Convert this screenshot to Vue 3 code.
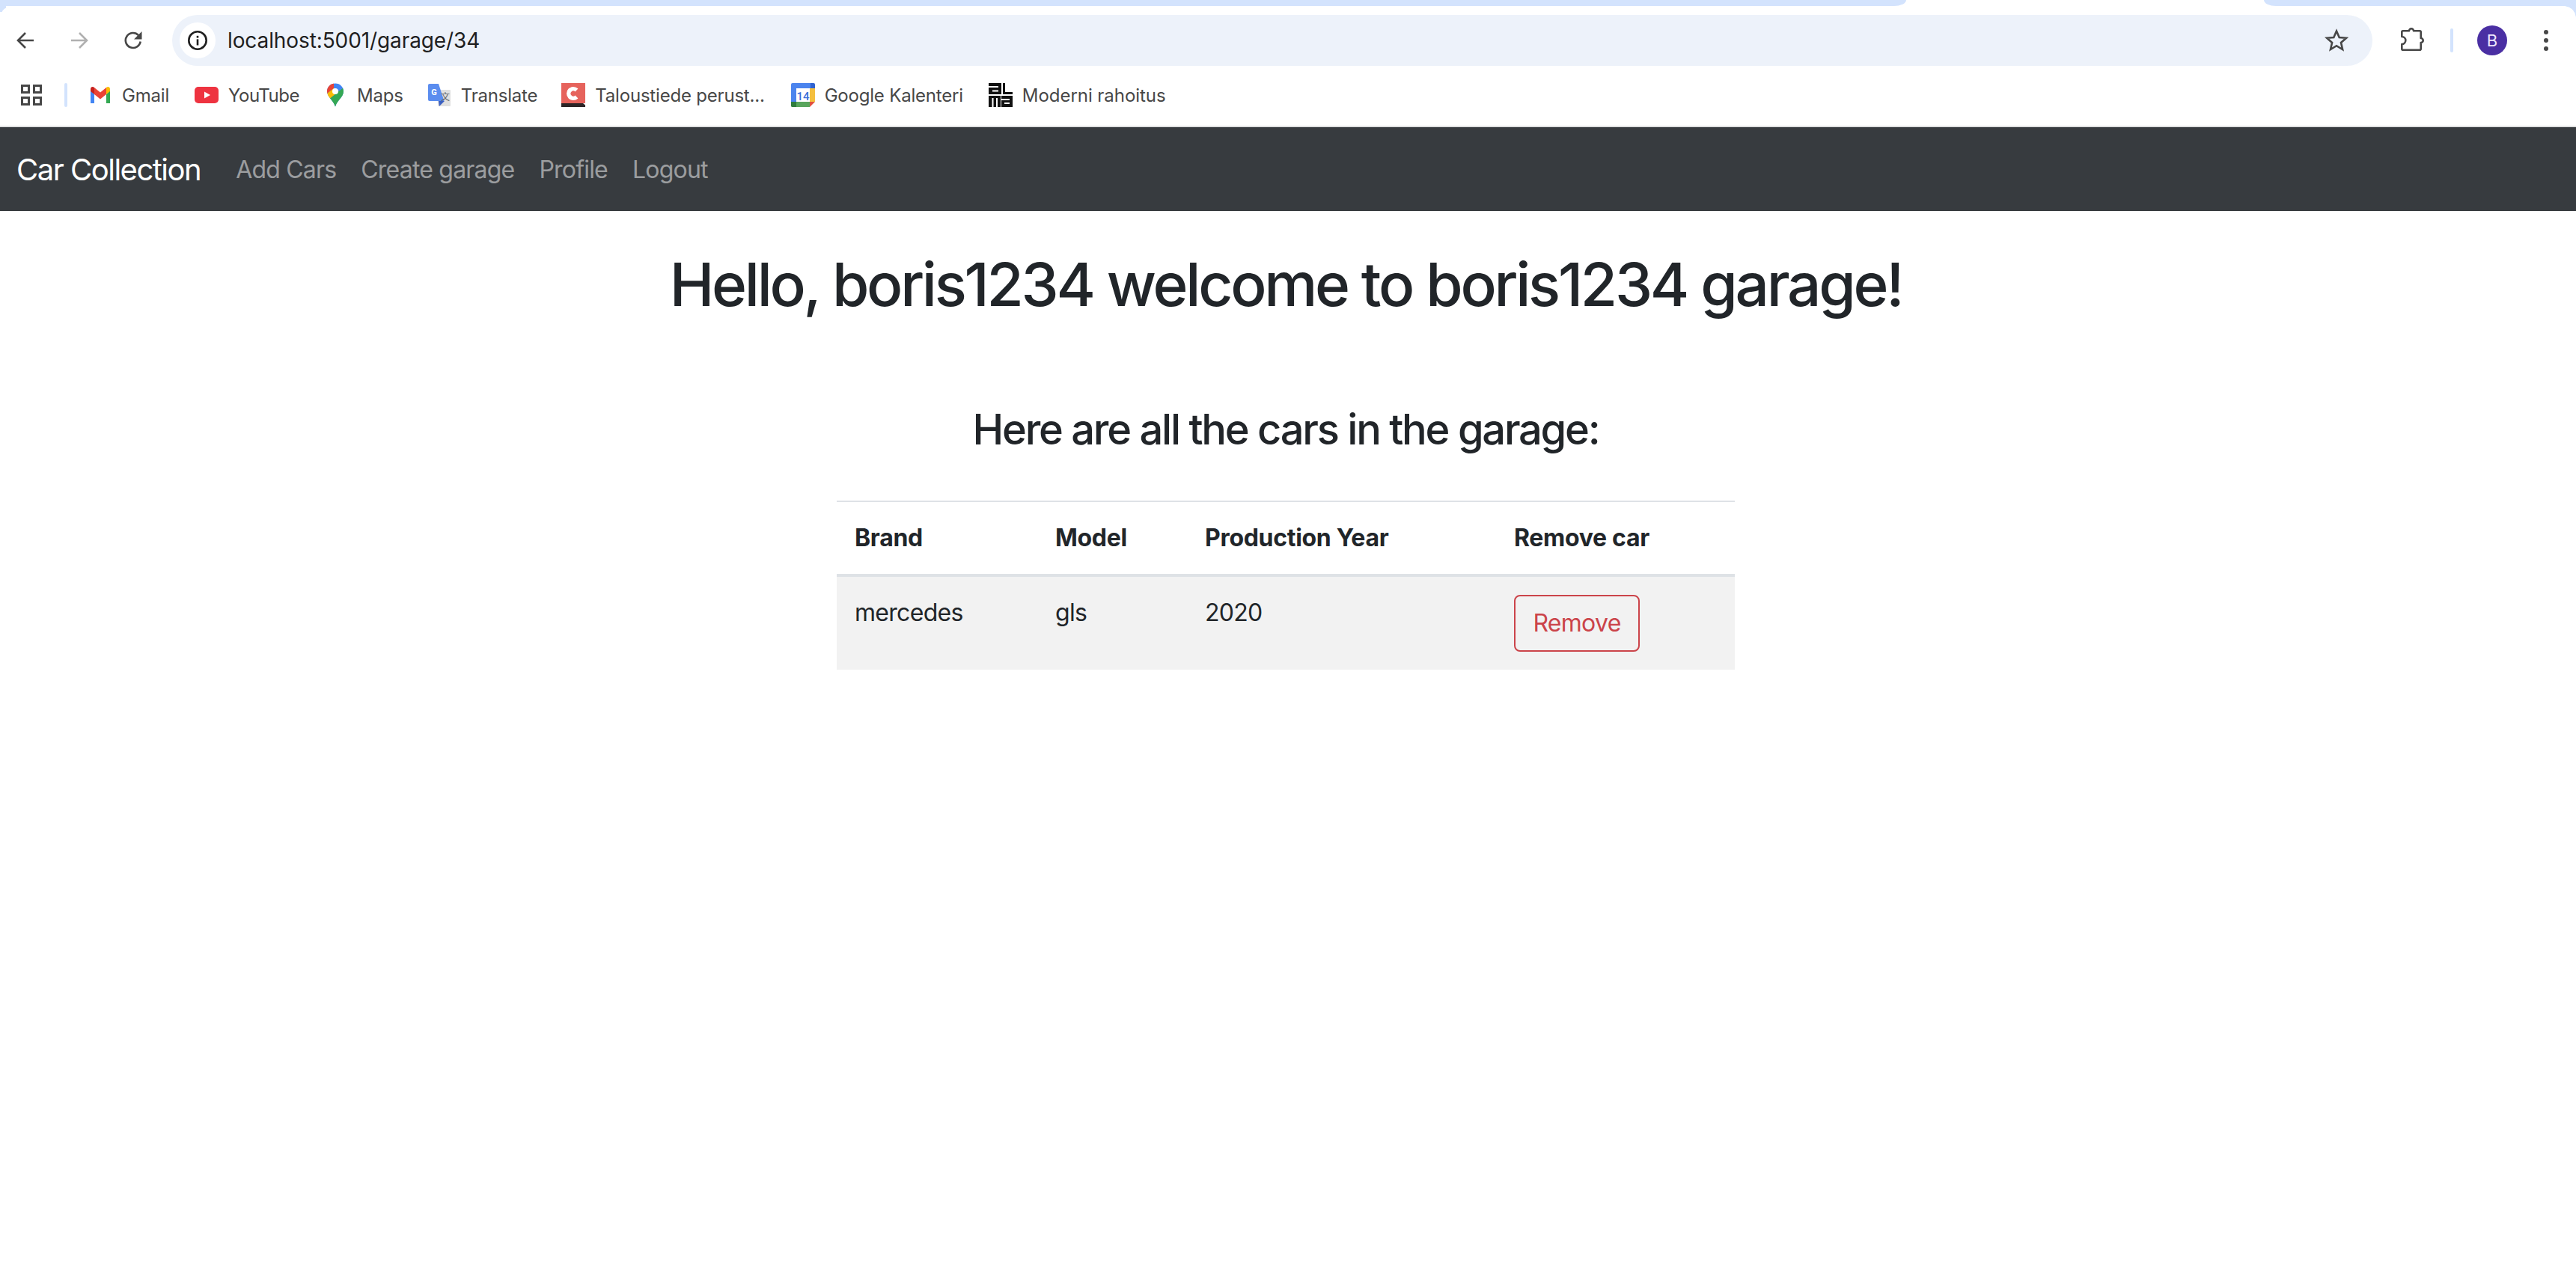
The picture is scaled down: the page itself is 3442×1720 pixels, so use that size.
<script setup>
const bookmarks = [
  { name: 'Gmail', icon: 'gmail' },
  { name: 'YouTube', icon: 'youtube' },
  { name: 'Maps', icon: 'maps' },
  { name: 'Translate', icon: 'translate' },
  { name: 'Taloustiede perust...', icon: 'c' },
  { name: 'Google Kalenteri', icon: 'calendar' },
  { name: 'Moderni rahoitus', icon: 'alma' }
]
const navLinks = ['Add Cars', 'Create garage', 'Profile', 'Logout']
</script>

<template>
  <div class="page">
    <div class="tabstrip">
      <div class="strip left"></div>
      <div class="strip right"></div>
    </div>
    <div class="toolbar">
      <svg class="tool-icon" viewBox="0 0 24 24"><path d="M23 12H3M12 2 2 12l10 10" fill="none" stroke="#474747" stroke-width="2.600"/></svg>
      <svg class="tool-icon" viewBox="0 0 24 24"><path d="M1 12h20M12 2l10 10-10 10" fill="none" stroke="#b0b0b0" stroke-width="2.600"/></svg>
      <svg class="tool-icon" viewBox="0 0 24 24"><path d="M21.700 13.500A10 10 0 1 1 19 5" fill="none" stroke="#474747" stroke-width="2.600"/><path d="M23.500 0v10.500H13z" fill="#474747"/></svg>
      <div class="omnibox">
        <div class="info-chip">
          <svg class="info-icon" viewBox="0 0 24 24"><circle cx="12" cy="12" r="10.800" fill="none" stroke="#1f1f1f" stroke-width="2.400"/><rect x="10.800" y="10.500" width="2.400" height="7.500" fill="#1f1f1f"/><rect x="10.800" y="6.300" width="2.400" height="2.600" fill="#1f1f1f"/></svg>
        </div>
        <span class="url">localhost:5001/garage/34</span>
        <svg class="star" viewBox="0 0 32 32"><path d="m16 3.500 3.700 8.500 9.300.800-7 6.100 2.100 9.100-8.100-4.800-8 4.800 2.100-9.100-7-6.100 9.200-.800z" fill="none" stroke="#474747" stroke-width="2.600"/></svg>
      </div>
      <svg class="puzzle" viewBox="0 0 32 32"><path d="M2.800 5.300H11A3 3 0 0 1 17 5.300H25.200a1.500 1.500 0 0 1 1.500 1.500V15A3 3 0 0 1 26.700 21V29.200a1.500 1.500 0 0 1-1.500 1.500H2.800a1.500 1.500 0 0 1-1.500-1.500V23A5 5 0 0 0 1.300 13V6.800a1.500 1.500 0 0 1 1.500-1.500z" fill="none" stroke="#474747" stroke-width="2.600" stroke-linejoin="round"/></svg>
      <div class="tool-sep"></div>
      <div class="avatar">B</div>
      <svg class="dots" viewBox="0 0 8 32"><circle cx="4" cy="5" r="3" fill="#474747"/><circle cx="4" cy="16" r="3" fill="#474747"/><circle cx="4" cy="27" r="3" fill="#474747"/></svg>
    </div>

    <div class="bookmarks">
      <svg class="apps" viewBox="0 0 28 28">
        <g fill="none" stroke="#474747" stroke-width="3"><rect x="1.500" y="1.500" width="9" height="9"/><rect x="17.500" y="1.500" width="9" height="9"/><rect x="1.500" y="17.500" width="9" height="9"/><rect x="17.500" y="17.500" width="9" height="9"/></g>
      </svg>
      <div class="bm-sep"></div>
      <div class="bm-list">
        <div v-for="b in bookmarks" :key="b.name" class="bm" :class="'bm-' + b.icon">
          <svg v-if="b.icon === 'gmail'" class="bm-icon" viewBox="0 0 32 32">
            <path d="M3 27h5V15L3 10z" fill="#4285f4"/><path d="M24 27h5V10l-5 5z" fill="#34a853"/><path d="M24 6v9l5-4V8c0-3-3-4-5-2z" fill="#fbbc04"/><path d="M8 15V6l8 6.500L24 6v9l-8 6.500z" fill="#ea4335"/><path d="M3 8v3l5 4V6C6 4 3 5 3 8z" fill="#c5221f"/>
          </svg>
          <svg v-else-if="b.icon === 'youtube'" class="bm-icon" viewBox="0 0 32 32">
            <rect x="0" y="5" width="32" height="22" rx="5" fill="#ee3340"/><path d="M13 11.500 21 16l-8 4.500z" fill="#fff"/>
          </svg>
          <svg v-else-if="b.icon === 'maps'" class="bm-icon" viewBox="0 0 32 32">
            <clipPath id="pin"><path d="M16 .5C9.500.5 5 5.500 5 11c0 8 8 11 11 20.500 3-9.500 11-12.500 11-20.500C27 5.500 22.500.5 16 .5z"/></clipPath>
            <g clip-path="url(#pin)">
              <rect width="32" height="32" fill="#4285f4"/>
              <path d="M0 0h14v7L0 18z" fill="#ea4335"/>
              <path d="M0 18 14 7l7 4L6 23H0z" fill="#fbbc04"/>
              <path d="M6 23 27 6h5v26H0z" fill="#34a853"/>
            </g>
            <circle cx="16" cy="11" r="4" fill="#fff"/>
          </svg>
          <svg v-else-if="b.icon === 'translate'" class="bm-icon" viewBox="0 0 32 32">
            <rect x="14" y="9" width="17" height="22" rx="1" fill="#e0e0e0"/>
            <path d="M3 1h12l7.500 23H3a2 2 0 0 1-2-2V3a2 2 0 0 1 2-2z" fill="#5b8def"/>
            <path d="M15 24h8l-7 7z" fill="#3b5fc0"/>
            <text x="9" y="16" text-anchor="middle" class="gt-g">G</text>
            <text x="24" y="23" text-anchor="middle" class="gt-k">文</text>
          </svg>
          <svg v-else-if="b.icon === 'c'" class="bm-icon" viewBox="0 0 32 32">
            <rect width="32" height="27" fill="#e6635c"/><path d="M0 27h29l3 2.500V32H0z" fill="#2b2426"/>
            <path d="M20.500 9.500a6.300 6.300 0 1 0 0 9" fill="none" stroke="#fff" stroke-width="5.500"/>
          </svg>
          <svg v-else-if="b.icon === 'calendar'" class="bm-icon" viewBox="0 0 32 32">
            <path d="M2 0h24v7H7v18H0V2a2 2 0 0 1 2-2z" fill="#4b84ee"/>
            <path d="M26 0h4a2 2 0 0 1 2 2v5h-6z" fill="#2f62d0"/>
            <rect x="25" y="7" width="7" height="18" fill="#f4bf3f"/>
            <path d="M7 25h18v7H2a2 2 0 0 1-2-2v-5z" fill="#58a55c"/>
            <path d="M0 25h7v7H2a2 2 0 0 1-2-2z" fill="#2f7d3d"/>
            <path d="M25 25h7l-7 7z" fill="#e0503f"/>
            <text x="16" y="22.500" text-anchor="middle" class="cal-num">14</text>
          </svg>
          <svg v-else class="bm-icon" viewBox="0 0 32 32">
            <rect width="17" height="15" fill="#111"/>
            <rect y="4" width="13" height="2" fill="#fff"/>
            <rect x="5" y="9.500" width="8" height="2" fill="#fff"/>
            <path d="M19 0h3v12h10v3H19z" fill="#111"/>
            <rect y="17" width="16" height="15" fill="#111"/>
            <rect x="4.500" y="20" width="2" height="12" fill="#fff"/>
            <rect x="10" y="20" width="2" height="12" fill="#fff"/>
            <rect x="17" y="17" width="15" height="15" fill="#111"/>
            <rect x="17" y="21" width="11" height="2" fill="#fff"/>
            <rect x="21" y="26" width="7" height="2" fill="#fff"/>
          </svg>
          <span class="bm-text">{{ b.name }}</span>
        </div>
      </div>
    </div>

    <nav class="navbar">
      <a class="brand">Car Collection</a>
      <a v-for="link in navLinks" :key="link" class="nav-link">{{ link }}</a>
    </nav>

    <main class="content">
      <h1 class="title">Hello, boris1234 welcome to boris1234 garage!</h1>
      <h3 class="subtitle">Here are all the cars in the garage:</h3>
      <table class="cars">
        <colgroup>
          <col class="c1" /><col class="c2" /><col class="c3" /><col class="c4" />
        </colgroup>
        <thead>
          <tr><th>Brand</th><th>Model</th><th>Production Year</th><th>Remove car</th></tr>
        </thead>
        <tbody>
          <tr>
            <td>mercedes</td>
            <td>gls</td>
            <td>2020</td>
            <td><button class="remove">Remove</button></td>
          </tr>
        </tbody>
      </table>
    </main>
  </div>
</template>

<style>
html, body { margin: 0; background: #fff; }
</style>

<style scoped>
.page {
  width: 3442px;
  height: 1720px;
  overflow: hidden;
  background: #fff;
  font-family: Inter, "Liberation Sans", sans-serif;
  color: #212529;
}
.tabstrip { height: 8px; display: flex; justify-content: space-between; }
.strip { height: 8px; background: #d3e3fd; }
.strip.left { width: 2547px; border-bottom-right-radius: 16px 8px; }
.strip.right { width: 417px; border-bottom-left-radius: 16px 8px; }
.toolbar {
  position: relative;
  height: 92px;
  display: flex;
  align-items: flex-start;
  padding-top: 12px;
  box-sizing: border-box;
}
.toolbar::before, .toolbar::after {
  content: "";
  position: absolute;
  top: 0;
  width: 16px;
  height: 16px;
}
.toolbar::before { left: 0; background: radial-gradient(circle at 100% 100%, transparent 15.500px, #d3e3fd 16px); width: 8px; height: 8px; background-size: 16px 16px; }
.toolbar::after { right: 0; background: radial-gradient(circle at 0 100%, transparent 15.500px, #d3e3fd 16px); }
.tool-icon { width: 24px; height: 24px; margin: 22px 0 0 22px; flex: none; }
.tool-icon + .tool-icon { margin-left: 48px; }
.omnibox {
  margin-left: 40px;
  width: 2940px;
  height: 68px;
  border-radius: 34px;
  background: #edf2fa;
  display: flex;
  align-items: center;
  flex: none;
}
.info-chip {
  width: 48px;
  height: 48px;
  margin-left: 10px;
  border-radius: 50%;
  background: #fff;
  display: flex;
  align-items: center;
  justify-content: center;
}
.info-icon { width: 26px; height: 26px; }
.url {
  margin-left: 16px;
  font-size: 28px;
  letter-spacing: -0.1px;
  color: #1f1f1f;
  flex: 1;
  line-height: 68px;
}
.star { width: 32px; height: 32px; margin-right: 32px; }
.puzzle { width: 32px; height: 32px; margin: 16px 0 0 38px; flex: none; }
.tool-sep { width: 4px; height: 32px; border-radius: 2px; background: #d3e3fd; margin: 18px 0 0 34px; flex: none; }
.avatar {
  width: 40px;
  height: 40px;
  border-radius: 50%;
  background: #4a2fa3;
  color: #efe9ff;
  font-size: 22px;
  line-height: 40px;
  text-align: center;
  margin: 14px 0 0 32px;
  flex: none;
}
.dots { width: 8px; height: 32px; margin: 18px 0 0 48px; flex: none; }

.bookmarks {
  height: 54px;
  padding-bottom: 14px;
  display: flex;
  align-items: center;
  border-bottom: 2px solid #e1e1e1;
}
.apps { width: 28px; height: 28px; margin-left: 28px; flex: none; }
.bm-sep { width: 4px; height: 32px; border-radius: 2px; background: #d3e3fd; margin-left: 30px; flex: none; }
.bm-list { display: flex; align-items: center; gap: 32px; margin-left: 28px; }
.bm { display: flex; align-items: center; gap: 13px; }
.bm-youtube { margin-left: 2px; }
.bm-calendar { margin-left: 3px; }
.bm-alma { margin-left: 2px; }
.bm-icon { width: 32px; height: 32px; flex: none; display: block; }
.bm-text { font-size: 24px; letter-spacing: -0.2px; color: #474747; white-space: nowrap; }
.bm-youtube .bm-text { letter-spacing: -0.5px; }
.bm-alma .bm-text { letter-spacing: -0.05px; }
.gt-g { font: 700 11px Roboto, sans-serif; fill: #fff; }
.gt-k { font: 400 12px "Noto Sans CJK SC", sans-serif; fill: #5f6368; }
.cal-num { font: 500 15px Roboto, sans-serif; fill: #3a6fd8; }

.navbar {
  height: 112px;
  background: #373b3f;
  display: flex;
  align-items: center;
  padding-left: 22px;
  box-sizing: border-box;
}
.brand { font-size: 40px; letter-spacing: -1.5px; color: #fff; margin-right: 47px; }
.nav-link { font-size: 32px; letter-spacing: -0.8px; color: rgba(255, 255, 255, 0.5); margin-right: 33px; }

.content { width: 3436px; display: flex; flex-direction: column; align-items: center; }
.title { font-size: 80px; font-weight: 500; letter-spacing: -3.25px; line-height: 96px; margin: 50px 0 0; }
.subtitle { font-size: 56px; font-weight: 500; letter-spacing: -2.25px; line-height: 68px; margin: 112px 0 0; }
.cars {
  width: 1200px;
  table-layout: fixed;
  border-collapse: collapse;
  margin-top: 61px;
  font-size: 32px;
}
.c1 { width: 268px; }
.c2 { width: 200px; }
.c3 { width: 413px; }
.c4 { width: 319px; }
.cars th, .cars td {
  padding: 24px;
  text-align: left;
  vertical-align: top;
  line-height: 48px;
  letter-spacing: -0.7px;
}
.cars th {
  font-weight: 700;
  letter-spacing: -0.3px;
  border-top: 2px solid #dee2e6;
  border-bottom: 4px solid #dee2e6;
}
.cars tbody tr { background: #f2f2f2; }
.remove {
  display: block;
  width: 168px;
  height: 76px;
  padding: 0;
  border: 2px solid #cb444a;
  border-radius: 8px;
  background: transparent;
  color: #cb444a;
  letter-spacing: -0.7px;
  font: 400 32px/48px Inter, "Liberation Sans", sans-serif;
}
</style>
